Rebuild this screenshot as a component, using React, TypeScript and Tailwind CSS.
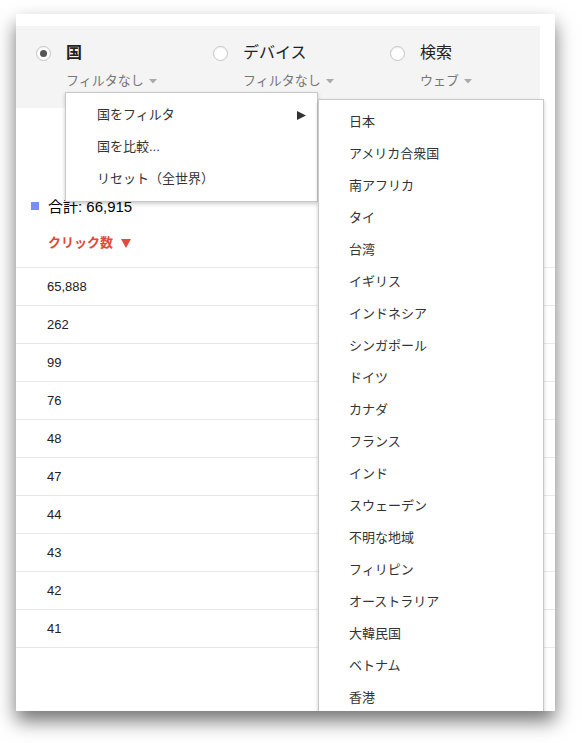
import React from 'react';

const font = { fontFamily: '"Liberation Sans", "Noto Sans CJK JP", sans-serif' };

interface TabItem {
  label: string;
  sub: string;
  selected: boolean;
}

const tabs: TabItem[] = [
  { label: '国', sub: 'フィルタなし', selected: true },
  { label: 'デバイス', sub: 'フィルタなし', selected: false },
  { label: '検索', sub: 'ウェブ', selected: false },
];

const clicks = ['65,888', '262', '99', '76', '48', '47', '44', '43', '42', '41'];

const countries = [
  '日本',
  'アメリカ合衆国',
  '南アフリカ',
  'タイ',
  '台湾',
  'イギリス',
  'インドネシア',
  'シンガポール',
  'ドイツ',
  'カナダ',
  'フランス',
  'インド',
  'スウェーデン',
  '不明な地域',
  'フィリピン',
  'オーストラリア',
  '大韓民国',
  'ベトナム',
  '香港',
];

function Radio({ selected }: { selected: boolean }) {
  return (
    <div className="w-[15px] h-[15px] mt-[3px] rounded-full border border-[#c4c4c4] bg-white flex items-center justify-center shadow-[inset_0_1px_1px_rgba(0,0,0,0.06)] shrink-0">
      {selected && <div className="w-[7px] h-[7px] rounded-full bg-[#555]" />}
    </div>
  );
}

function Caret() {
  return (
    <svg width="8" height="5" viewBox="0 0 8 5" className="ml-[5px] mt-[1px]">
      <path d="M0 0 L8 0 L4 4.5 Z" fill="#aaa" />
    </svg>
  );
}

export default function App() {
  return (
    <div className="w-[585px] h-[743px] bg-white pt-[14px] pl-[16px]" style={font}>
      <div className="relative w-[539px] h-[697px] bg-white overflow-hidden shadow-[0_10px_18px_rgba(0,0,0,0.55)]">
        {/* ヘッダー */}
        <div className="pt-[12px] pr-[15px]">
          <div className="bg-[#f4f4f4] h-[82px] pl-[20px] pt-[17px] flex">
            {tabs.map((tab) => (
              <div key={tab.label} className="w-[177px] shrink-0 flex gap-[15px]">
                <Radio selected={tab.selected} />
                <div>
                  <div
                    className={`text-[16px] leading-[20px] text-[#222] ${tab.selected ? 'font-bold' : ''}`}
                  >
                    {tab.label}
                  </div>
                  <div className="mt-[9px] flex items-center text-[13px] leading-[18px] text-[#777]">
                    {tab.sub}
                    <Caret />
                  </div>
                </div>
              </div>
            ))}
          </div>
        </div>

        {/* 合計 */}
        <div className="mt-[89px] pl-[15px] flex items-start">
          <div className="w-[8px] h-[8px] mt-[5px] bg-[#7290f7]" />
          <div className="ml-[9px] text-[15px] leading-[20px] text-black">合計: 66,915</div>
        </div>
        <div className="mt-[17px] pl-[32px] flex items-center text-[13px] leading-[18px] font-bold text-[#dd4b39]">
          クリック数
          <svg width="10" height="10" viewBox="0 0 10 10" className="ml-[8px]">
            <path d="M0 1 L10 1 L5 10 Z" fill="#dd4b39" />
          </svg>
        </div>

        <div className="mt-[15px] border-t border-[#e8e8e8]">
          {clicks.map((c) => (
            <div
              key={c}
              className="h-[38px] border-b border-[#e8e8e8] pl-[31px] flex items-center text-[13px] text-[#222]"
            >
              {c}
            </div>
          ))}
        </div>

        {/* メニュー */}
        <div className="absolute left-[49px] top-[78px] w-[253px] py-[6px] bg-white border border-[#c8c8c8] shadow-[0_2px_4px_rgba(0,0,0,0.2)] text-[13px] text-[#333]">
          <div className="h-[32px] pl-[31px] pr-[11px] flex items-center justify-between">
            <span>国をフィルタ</span>
            <svg width="9" height="9" viewBox="0 0 9 9">
              <path d="M0 0 L9 4.5 L0 9 Z" fill="#333" />
            </svg>
          </div>
          <div className="h-[32px] pl-[31px] flex items-center">国を比較...</div>
          <div className="h-[32px] pl-[31px] flex items-center">リセット（全世界）</div>
        </div>

        <div className="absolute left-[302px] top-[85px] w-[226px] h-[640px] py-[6px] bg-white border border-[#c8c8c8] shadow-[0_2px_4px_rgba(0,0,0,0.2)] text-[13px] text-[#333]">
          {countries.map((name) => (
            <div key={name} className="h-[32px] pl-[30px] flex items-center">
              {name}
            </div>
          ))}
        </div>
      </div>
    </div>
  );
}
